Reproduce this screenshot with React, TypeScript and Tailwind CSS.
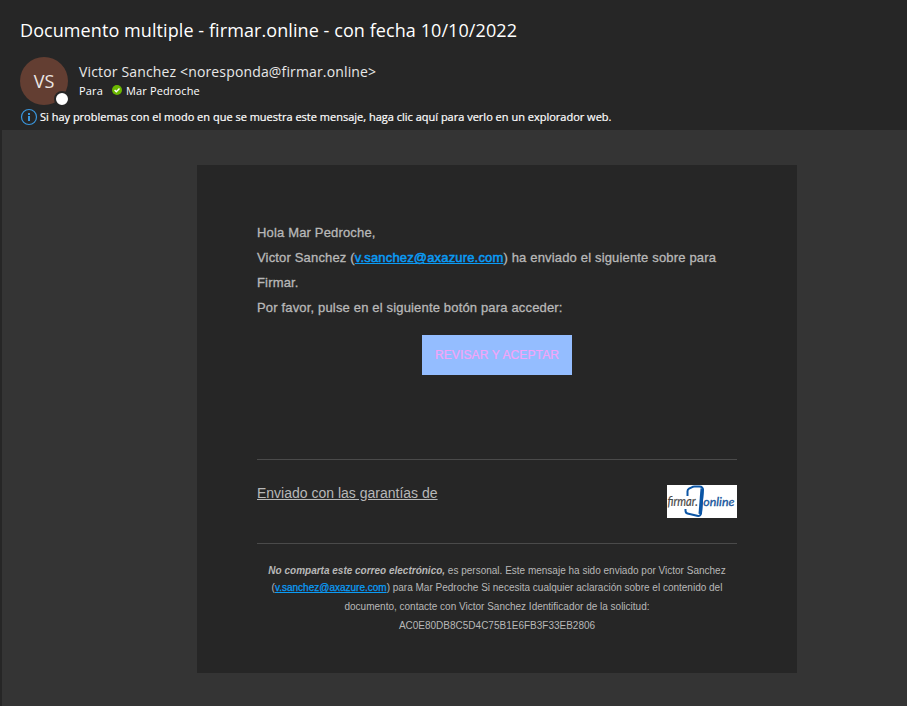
import React from "react";

function Avatar() {
  return (
    <div className="relative mt-[1px] h-12 w-12 shrink-0 rounded-full bg-[#633e32] font-['Open_Sans','Noto_Sans',sans-serif] text-[18px] leading-[49px] text-[#ece6e4] text-center">
      VS
      <span className="absolute left-[34px] top-[34px] h-4 w-4 rounded-full border-2 border-[#262626] bg-white" />
    </div>
  );
}

function Logo() {
  return (
    <svg className="h-[33px] w-[70px] bg-white" viewBox="0 0 70 33">
      <path d="M20.5 11V6.2Q20.5 4.5 22 3.7L24.6 2.3Q25.8 1.6 27.5 1.6H32.5q3.5 0 3.4 3.2L34 27.8q-.3 3.8-3.9 3L20.5 28.5q-2-.5-2-3V24" fill="none" stroke="#0b55a5" strokeWidth="2" />
      <path d="M35.2 3.5 33.2 29" fill="none" stroke="#0b55a5" strokeWidth="3.4" />
      <g transform="translate(0.5 21) scale(0.86 1.1)">
        <text fill="#464646" stroke="#464646" strokeWidth="0.2" fontFamily="Lato, sans-serif" fontStyle="italic" fontSize="13">firmar.</text>
      </g>
      <g transform="translate(36.3 21)">
        <text fill="#17569c" stroke="#17569c" strokeWidth="0.35" fontFamily="Lato, sans-serif" fontStyle="italic" fontSize="12.4">online</text>
      </g>
    </svg>
  );
}

export default function App() {
  return (
    <div className="h-[706px] w-[907px] overflow-hidden bg-[#262626]">
      <header className="h-[130px] pl-5 pt-4 font-['Open_Sans','Noto_Sans',sans-serif] text-white">
        <h1 className="h-10 whitespace-nowrap text-[18px] leading-7 tracking-[0.08px]">Documento multiple - firmar.online - con fecha 10/10/2022</h1>
        <div className="flex h-[51px] gap-[11px]">
          <Avatar />
          <div className="whitespace-nowrap pt-[6px]">
            <div className="h-[21px] text-[14px] leading-5 tracking-[0.15px] text-[#e8e8e8]">Victor Sanchez &lt;noresponda@firmar.online&gt;</div>
            <div className="flex h-4 items-center text-[11px] leading-4 tracking-[0.14px]">
              <span className="w-[33px]">Para</span>
              <svg className="mb-[2px] mr-1 h-[10px] w-[10px]" viewBox="0 0 10 10">
                <circle cx="5" cy="5" r="5" fill="#6bb700" />
                <path d="m2.6 5.1 1.7 1.7 3.2-3.3" fill="none" stroke="white" strokeWidth="1.4" />
              </svg>
              <span>Mar Pedroche</span>
            </div>
          </div>
        </div>
        <div className="flex h-5 items-center gap-[2px] whitespace-nowrap text-[11px]">
          <svg className="h-[18px] w-[18px] shrink-0" viewBox="0 0 18 18">
            <circle cx="9" cy="9" r="7.5" fill="none" stroke="#3a96dd" strokeWidth="1.2" />
            <path d="M9 8v5M9 5v2" stroke="#3a96dd" strokeWidth="2" />
          </svg>
          <span className="[-webkit-text-stroke:0.2px_white]">Si hay problemas con el modo en que se muestra este mensaje, haga clic aquí para verlo en un explorador web.</span>
        </div>
      </header>
      <main className="ml-[2px] h-[576px] bg-[#343434] pl-[195px] pt-[35px]">
        <article className="h-[508px] w-[600px] bg-[#262626] px-[60px] pt-[55px] font-['Liberation_Sans',Arial,sans-serif] text-[#b8b8b8]">
          <div className="h-[115px] whitespace-nowrap text-[13px] leading-[25px] tracking-[0.165px] [-webkit-text-stroke:0.3px_currentColor]">
            <p>Hola Mar Pedroche,</p>
            <p>Victor Sanchez (<a className="text-[#0a9cf5] underline [-webkit-text-stroke:0.5px_currentColor]">v.sanchez@axazure.com</a>) ha enviado el siguiente sobre para</p>
            <p>Firmar.</p>
            <p>Por favor, pulse en el siguiente botón para acceder:</p>
          </div>
          <button className="mx-auto block h-10 w-[150px] bg-[#94bdff] text-center text-[12px] tracking-[0.12px] text-[#f4a4f8] [-webkit-text-stroke:0.2px_currentColor]">REVISAR Y ACEPTAR</button>
          <div className="mt-[84px] flex h-[85px] items-start justify-between border-y border-[#4a4a4a] pt-[25px]">
            <span className="text-[14px] leading-4 underline">Enviado con las garantías de</span>
            <Logo />
          </div>
          <footer className="whitespace-nowrap pt-[18px] text-center text-[10px]">
            <p className="h-[17px] leading-[18px]"><b><i>No comparta este correo electrónico,</i></b> es personal. Este mensaje ha sido enviado por Victor Sanchez</p>
            <p className="h-[19px] leading-[18px]">(<a className="text-[#0a9cf5] underline [-webkit-text-stroke:0.25px_currentColor]">v.sanchez@axazure.com</a>) para Mar Pedroche Si necesita cualquier aclaración sobre el contenido del</p>
            <p className="h-[19px] leading-[18px]">documento, contacte con Victor Sanchez Identificador de la solicitud:</p>
            <p className="h-[19px] leading-[18px]">AC0E80DB8C5D4C75B1E6FB3F33EB2806</p>
          </footer>
        </article>
      </main>
    </div>
  );
}
